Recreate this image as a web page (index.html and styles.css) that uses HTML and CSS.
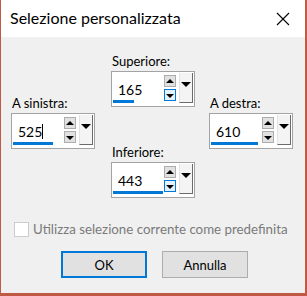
FILE: index.html
```html
<!DOCTYPE html>
<html lang="it">

<head>
    <meta charset="UTF-8">
    <meta name="viewport" content="width=device-width, initial-scale=1.0">
    <title>Selezione personalizzata</title>
    <link rel="stylesheet" href="styles.css">
</head>

<body>
    <div class="window">
        <!-- Title bar -->
        <div class="titlebar">
            <span class="title">Selezione personalizzata</span>
            <svg class="close" width="14" height="14" viewBox="0 0 14 14">
                <path d="M1 1 L13 13 M13 1 L1 13" stroke="#000" stroke-width="1.1" fill="none" />
            </svg>
        </div>

        <!-- Client area -->
        <div class="client">
            <div class="fields">
                <div class="col side">
                    <div class="field">
                        <div class="field-label">A sinistra:</div>
                        <div class="spin">
                            <div class="spin-input">525<span class="caret"></span>
                                <div class="bar" style="width: 40px;"></div>
                            </div>
                            <div class="spin-btns">
                                <span class="sbtn up"></span>
                                <span class="sbtn down"></span>
                            </div>
                            <div class="drop"></div>
                        </div>
                    </div>
                </div>

                <div class="col center">
                    <div class="field">
                        <div class="field-label">Superiore:</div>
                        <div class="spin">
                            <div class="spin-input">165
                                <div class="bar" style="width: 21px;"></div>
                            </div>
                            <div class="spin-btns">
                                <span class="sbtn up"></span>
                                <span class="sbtn down hot"></span>
                            </div>
                            <div class="drop"></div>
                        </div>
                    </div>

                    <div class="field lower">
                        <div class="field-label">Inferiore:</div>
                        <div class="spin">
                            <div class="spin-input">443
                                <div class="bar" style="width: 50px;"></div>
                            </div>
                            <div class="spin-btns">
                                <span class="sbtn up"></span>
                                <span class="sbtn down hot"></span>
                            </div>
                            <div class="drop"></div>
                        </div>
                    </div>
                </div>

                <div class="col side">
                    <div class="field">
                        <div class="field-label">A destra:</div>
                        <div class="spin">
                            <div class="spin-input">610
                                <div class="bar" style="width: 47px;"></div>
                            </div>
                            <div class="spin-btns">
                                <span class="sbtn up"></span>
                                <span class="sbtn down"></span>
                            </div>
                            <div class="drop"></div>
                        </div>
                    </div>
                </div>
            </div>

            <label class="check">
                <span class="check-box"></span>
                <span>Utilizza selezione corrente come predefinita</span>
            </label>

            <div class="buttons">
                <button class="btn default">OK</button>
                <button class="btn">Annulla</button>
            </div>
        </div>
    </div>
</body>

</html>
```

FILE: styles.css
```css
body, html {
    margin: 0;
    height: 100%;
    background-color: #c05a45;
    font-family: Lato, "Noto Sans", sans-serif;
}

/* Dialog window */
.window {
    width: 304px;
    height: 293px;
    margin-left: 1px;
    background-color: #f0f0f0;
    display: flex;
    flex-direction: column;
}

.titlebar {
    height: 37px;
    background-color: #ffffff;
    display: flex;
    align-items: center;
    justify-content: space-between;
    padding: 0 15px 0 9px;
}

.title {
    font-size: 16px;
    color: #000;
    padding-bottom: 2px;
}

.close {
    display: block;
}

.client {
    flex: 1;
    padding: 0 0 0 10px;
}

/* Spin fields */
.fields {
    display: flex;
    align-items: flex-start;
}

.col {
    width: 84px;
}

.col.center {
    margin: 0 14px 0 16px;
    padding-top: 16px;
}

.col.side {
    padding-top: 58px;
}

.field.lower {
    margin-top: 37px;
}

.field-label {
    font-size: 13px;
    height: 16px;
    line-height: 16px;
    margin: 0 0 2px 1px;
    color: #000;
}

.spin {
    display: flex;
    height: 32px;
    border: 1px solid #a3a3a3;
    background-color: #ffffff;
    padding: 1px 1px 1px 0;
}

.spin-input {
    position: relative;
    flex: 1;
    font-size: 14px;
    padding: 8px 0 0 6px;
    color: #000;
}

.caret {
    display: inline-block;
    width: 1px;
    height: 15px;
    background-color: #000;
    vertical-align: -2px;
}

.bar {
    position: absolute;
    left: 1px;
    bottom: 2px;
    height: 3px;
    background-color: #0078d7;
}

.spin-btns {
    display: flex;
    flex-direction: column;
    gap: 2px;
    padding-top: 2px;
    margin-right: 3px;
}

.sbtn {
    position: relative;
    width: 10px;
    height: 10px;
    border: 1px solid #adadad;
    background-color: #e1e1e1;
}

.sbtn.hot {
    border-color: #0078d7;
    background-color: #e5f1fb;
}

.sbtn::after {
    content: "";
    position: absolute;
    left: 1px;
    border-left: 4px solid transparent;
    border-right: 4px solid transparent;
}

.sbtn.up::after {
    top: 3px;
    border-bottom: 4px solid #000;
}

.sbtn.down::after {
    top: 4px;
    border-top: 4px solid #000;
}

.drop {
    position: relative;
    width: 12px;
    height: 29px;
    background-color: #f4f4f4;
    border-left: 1px solid #e3e3e3;
    border-right: 1px solid #6b6b6b;
    border-bottom: 1px solid #6b6b6b;
}

.drop::after {
    content: "";
    position: absolute;
    top: 9px;
    left: 1px;
    border-left: 5px solid transparent;
    border-right: 5px solid transparent;
    border-top: 5px solid #000;
}

/* Checkbox */
.check {
    display: flex;
    align-items: center;
    gap: 4px;
    margin: 23px 0 0 3px;
    font-size: 13.3px;
    color: #7a7a7a;
}

.check-box {
    width: 13px;
    height: 13px;
    border: 1px solid #cccccc;
    background-color: #ffffff;
}

/* Buttons */
.buttons {
    display: flex;
    gap: 15px;
    margin: 14px 0 0 50px;
}

.btn {
    width: 86px;
    height: 27px;
    font-family: Lato, "Noto Sans", sans-serif;
    font-size: 13px;
    color: #000;
    background-color: #e1e1e1;
    border: 1px solid #adadad;
    padding: 0;
}

.btn.default {
    border: 2px solid #0078d7;
}
```
